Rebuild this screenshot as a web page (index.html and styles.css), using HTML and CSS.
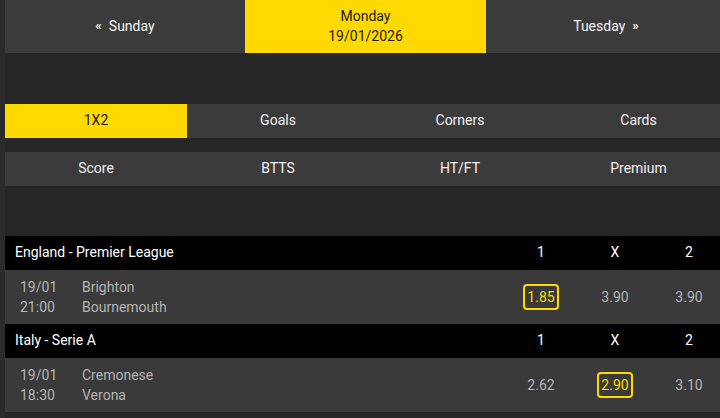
FILE: index.html
```html
<!DOCTYPE html>
<html>
<head>
<meta charset="utf-8">
<link rel="stylesheet" href="styles.css">
</head>
<body>
<div class="page">
  <div class="days">
    <div class="day"><span class="arr">«</span>Sunday</div>
    <div class="day active"><span>Monday</span><span>19/01/2026</span></div>
    <div class="day">Tuesday<span class="arr right">»</span></div>
  </div>

  <div class="tabs first">
    <div class="tab active">1X2</div>
    <div class="tab">Goals</div>
    <div class="tab">Corners</div>
    <div class="tab">Cards</div>
  </div>
  <div class="tabs second">
    <div class="tab">Score</div>
    <div class="tab">BTTS</div>
    <div class="tab">HT/FT</div>
    <div class="tab">Premium</div>
  </div>

  <div class="league">
    <div class="league-name">England - Premier League</div>
    <div class="odd-h">1</div>
    <div class="odd-h">X</div>
    <div class="odd-h">2</div>
  </div>
  <div class="match">
    <div class="when"><span>19/01</span><span>21:00</span></div>
    <div class="teams"><span>Brighton</span><span>Bournemouth</span></div>
    <div class="odd"><span class="pick">1.85</span></div>
    <div class="odd"><span>3.90</span></div>
    <div class="odd"><span>3.90</span></div>
  </div>

  <div class="league">
    <div class="league-name">Italy - Serie A</div>
    <div class="odd-h">1</div>
    <div class="odd-h">X</div>
    <div class="odd-h">2</div>
  </div>
  <div class="match">
    <div class="when"><span>19/01</span><span>18:30</span></div>
    <div class="teams"><span>Cremonese</span><span>Verona</span></div>
    <div class="odd"><span>2.62</span></div>
    <div class="odd"><span class="pick">2.90</span></div>
    <div class="odd"><span>3.10</span></div>
  </div>
</div>
</body>
</html>
```

FILE: styles.css
```css
html, body {
  margin: 0;
  padding: 0;
  background: #2b2b2b;
  overflow: hidden;
  height: 100%;
}
body {
  font-family: Roboto, "Liberation Sans", sans-serif;
  font-size: 14px;
  color: #f2f2f2;
}
.page {
  margin-left: 5px;
  width: 721px;
  min-height: 100%;
  background: #262626;
}
.days {
  display: grid;
  grid-template-columns: 240px 241px 240px;
  height: 53px;
}
.day {
  background: #3b3b3b;
  display: flex;
  align-items: center;
  justify-content: center;
  color: #f4f4f4;
  padding-bottom: 2px;
  box-sizing: border-box;
}
.day.active {
  background: #ffd900;
  color: #1b1b1b;
  flex-direction: column;
  line-height: 20px;
}
.arr {
  font-size: 13px;
  font-weight: 700;
  margin-right: 7px;
}
.arr.right {
  margin-right: 0;
  margin-left: 7px;
}
.tabs {
  display: grid;
  grid-template-columns: 182px 182px 182px 1fr;
  height: 34px;
  background: #3b3b3b;
}
.tabs.first {
  margin-top: 51px;
}
.tabs.second {
  margin-top: 14px;
}
.tab {
  display: flex;
  align-items: center;
  justify-content: center;
  color: #f4f4f4;
  padding-bottom: 2px;
  box-sizing: border-box;
}
.tab.active {
  background: #ffd900;
  color: #222;
}
.league {
  display: grid;
  grid-template-columns: 1fr 74px 74px 74px;
  height: 34px;
  background: #000;
  align-items: center;
  color: #fff;
  margin-top: 50px;
  padding-bottom: 2px;
  box-sizing: border-box;
}
.league + .match + .league {
  margin-top: 0;
}
.league-name {
  padding-left: 10px;
}
.odd-h {
  text-align: center;
}
.match {
  display: grid;
  grid-template-columns: 77px 1fr 74px 74px 74px;
  height: 54px;
  background: #3a3a3a;
  align-items: center;
  color: #b4b4b4;
  padding-bottom: 1px;
  box-sizing: border-box;
}
.when, .teams {
  display: flex;
  flex-direction: column;
  line-height: 20px;
}
.when {
  padding-left: 15px;
}
.odd {
  display: flex;
  justify-content: center;
  align-items: center;
}
.pick {
  color: #ffd900;
  border: 2px solid #ffd900;
  border-radius: 4px;
  width: 32px;
  height: 22px;
  display: flex;
  align-items: center;
  justify-content: center;
}
```
